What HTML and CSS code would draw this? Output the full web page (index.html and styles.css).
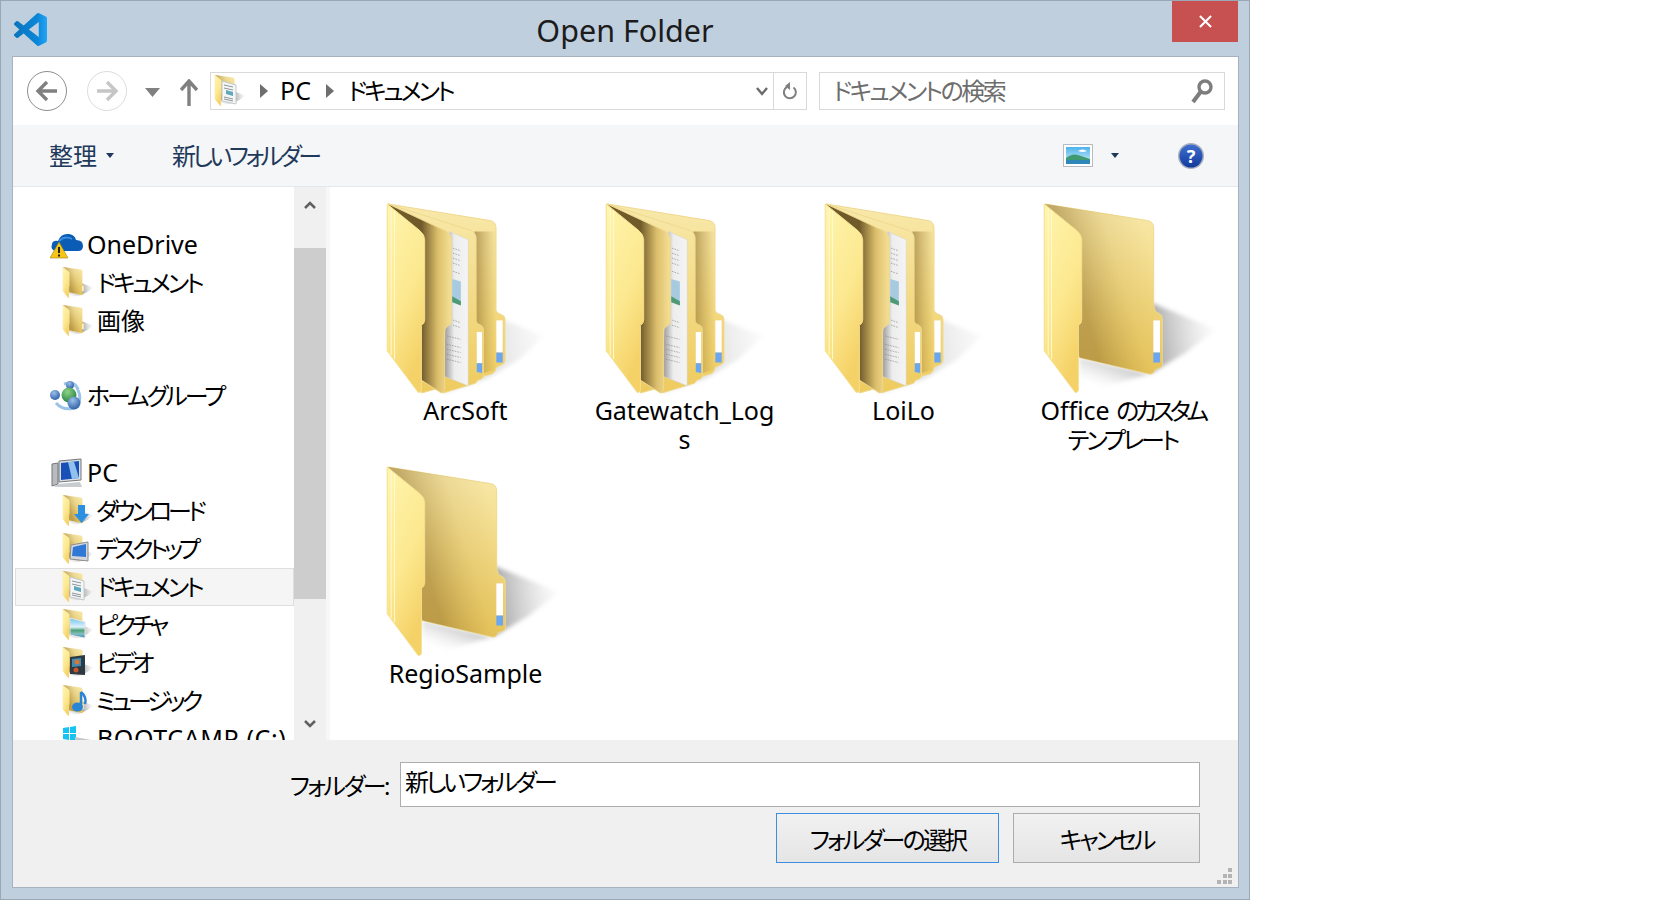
FILE: index.html
```html
<!DOCTYPE html>
<html lang="ja">
<head>
<meta charset="utf-8">
<title>Open Folder</title>
<link rel="stylesheet" href="styles.css">
</head>
<body>
<svg class="defs" aria-hidden="true">
  <defs>
    <linearGradient id="gBack" x1="0" y1="0" x2="0" y2="1"><stop offset="0" stop-color="#f8e9ab"/><stop offset="1" stop-color="#eecb5e"/></linearGradient>
    <linearGradient id="gShade" gradientUnits="userSpaceOnUse" x1="185" y1="300" x2="420" y2="230"><stop offset="0" stop-color="#8a6a28" stop-opacity=".5"/><stop offset=".55" stop-color="#a88838" stop-opacity=".14"/><stop offset="1" stop-color="#a88838" stop-opacity="0"/></linearGradient>
    <linearGradient id="gShade2" gradientUnits="userSpaceOnUse" x1="345" y1="0" x2="410" y2="0"><stop offset="0" stop-color="#8a6a28" stop-opacity=".6"/><stop offset="1" stop-color="#a88838" stop-opacity="0"/></linearGradient>
    <linearGradient id="gFront" x1="0" y1="0" x2="0.4" y2="1"><stop offset="0" stop-color="#fff5ad"/><stop offset=".6" stop-color="#fce88f"/><stop offset="1" stop-color="#f5d268"/></linearGradient>
    <linearGradient id="gMid" gradientUnits="userSpaceOnUse" x1="185" y1="0" x2="275" y2="0"><stop offset="0" stop-color="#705a2a"/><stop offset=".55" stop-color="#dcbf6c"/><stop offset="1" stop-color="#f6e096"/></linearGradient>
    <linearGradient id="gPaper" gradientUnits="userSpaceOnUse" x1="250" y1="0" x2="326" y2="0"><stop offset="0" stop-color="#8e8e8e"/><stop offset=".45" stop-color="#ededed"/><stop offset="1" stop-color="#f4f4f4"/></linearGradient>
    <linearGradient id="gSh" gradientUnits="userSpaceOnUse" x1="400" y1="450" x2="610" y2="425"><stop offset="0" stop-color="#777" stop-opacity=".7"/><stop offset=".55" stop-color="#aaa" stop-opacity=".35"/><stop offset="1" stop-color="#ccc" stop-opacity="0"/></linearGradient>
    <linearGradient id="gUnder" gradientUnits="userSpaceOnUse" x1="300" y1="520" x2="270" y2="600"><stop offset="0" stop-color="#999" stop-opacity=".55"/><stop offset="1" stop-color="#ccc" stop-opacity="0"/></linearGradient>
    <linearGradient id="gCode" x1="0" y1="0" x2="1" y2="0"><stop offset="0" stop-color="#0a74bd"/><stop offset=".7" stop-color="#0a86d8"/><stop offset="1" stop-color="#24a5f5"/></linearGradient>
    <linearGradient id="gHelp" x1="0" y1="0" x2="0" y2="1"><stop offset="0" stop-color="#3f6fd0"/><stop offset="1" stop-color="#123a9c"/></linearGradient>
    <linearGradient id="gSky" x1="0" y1="0" x2="0" y2="1"><stop offset="0" stop-color="#6ec2ee"/><stop offset=".45" stop-color="#dff2fb"/><stop offset=".62" stop-color="#4aa27a"/><stop offset=".8" stop-color="#86bfc0"/><stop offset="1" stop-color="#2a7fb8"/></linearGradient>
    <linearGradient id="gSkyV" x1="0" y1="0" x2="0" y2="1"><stop offset="0" stop-color="#4db3ea"/><stop offset="1" stop-color="#d9f0fb"/></linearGradient>
    <radialGradient id="gBlue" cx=".4" cy=".3" r=".8"><stop offset="0" stop-color="#9cc0ea"/><stop offset="1" stop-color="#1f559f"/></radialGradient>
    <radialGradient id="gGreen" cx=".4" cy=".3" r=".8"><stop offset="0" stop-color="#8fd48a"/><stop offset="1" stop-color="#1a7a36"/></radialGradient>
    <filter id="blur"><feGaussianBlur stdDeviation="7"/></filter>

    <g id="f-empty">
      <path filter="url(#blur)" fill="url(#gSh)" d="M405 340 L600 420 L510 490 L400 555 Z"/>
      <path filter="url(#blur)" fill="url(#gUnder)" d="M188 505 L400 555 L188 612 Z"/>
      <path fill="url(#gBack)" stroke="#efd98e" stroke-width="3" d="M85 42 L393 92 Q412 95 412 115 L412 345 Q414 368 428 372 Q438 376 438 388 L438 525 Q438 535 425 538 L415 542 Q412 555 400 555 L188 505 Z"/>
      <path fill="url(#gShade)" d="M85 42 L393 92 Q412 95 412 115 L412 345 Q414 368 428 372 Q438 376 438 388 L438 525 Q438 535 425 538 L415 542 Q412 555 400 555 L188 505 Z"/>
      <rect x="411" y="393" width="20" height="97" fill="#fff"/>
      <rect x="411" y="490" width="20" height="30" fill="#6ba6f2"/>
      <path fill="url(#gFront)" stroke="#f4e08f" stroke-width="3" d="M82 42 L180 122 Q195 135 195 150 L195 390 Q195 402 185 408 L185 600 Q185 612 175 610 L82 485 Z"/>
      <path fill="none" stroke="#fff9d0" stroke-width="3" d="M94 55 L94 498 M104 62 L104 510"/>
    </g>

    <g id="f-full">
      <path filter="url(#blur)" fill="url(#gSh)" opacity=".3" d="M430 390 L555 440 L480 510 L380 570 L250 612 L250 560 Z"/>
      <path fill="url(#gBack)" stroke="#efd98e" stroke-width="3" d="M85 42 L392 92 Q410 95 410 115 L410 362 Q412 372 425 375 Q437 378 437 390 L437 515 Q437 525 420 530 L410 535 Q408 552 395 555 L185 612 Z"/>
      <path fill="url(#gShade2)" d="M345 125 L410 125 L410 540 L345 560 Z"/>
      <rect x="411" y="393" width="19" height="97" fill="#fff"/>
      <rect x="411" y="490" width="19" height="30" fill="#6ba6f2"/>
      <path fill="url(#gBack)" stroke="#efd98e" stroke-width="3" d="M85 42 L335 122 Q350 130 350 145 L350 395 Q352 405 365 408 Q372 412 372 422 L372 560 Q372 570 355 573 Q350 585 340 585 L250 612 Z"/>
      <rect x="352" y="428" width="16" height="94" fill="#fff"/>
      <path d="M352 522 L368 522 L368 552 L352 549 Z" fill="#6ba6f2"/>
      <path fill="url(#gPaper)" stroke="#d5d5d5" stroke-width="1.5" d="M270 125 L326 150 L326 590 L250 560 Z"/>
      <g fill="none" stroke="#8a8a8a" stroke-width="2" stroke-dasharray="5 3">
        <path d="M280 175 L303 183 M280 190 L303 198 M280 205 L303 213 M280 220 L303 228 M280 245 L303 253"/>
        <path d="M280 392 L303 400 M280 407 L303 415 M262 440 L303 450 M262 465 L303 475 M262 480 L303 490 M262 495 L303 505 M262 510 L303 520"/>
      </g>
      <path fill="#a6cbe0" d="M278 268 L304 276 L304 345 L278 335 Z"/>
      <path fill="#4f9a76" d="M278 320 L304 335 L304 348 L278 338 Z"/>
      <path fill="url(#gMid)" stroke="#efd98e" stroke-width="3" d="M85 42 L262 125 Q275 135 275 148 L275 400 Q272 408 262 412 Q255 416 255 425 L255 600 Q253 612 245 612 L180 570 Z"/>
      <path fill="url(#gFront)" stroke="#f4e08f" stroke-width="3" d="M82 42 L180 122 Q195 135 195 150 L195 390 Q195 402 185 408 L185 600 Q185 612 175 610 L82 485 Z"/>
      <path fill="none" stroke="#fff9d0" stroke-width="3" d="M94 55 L94 498 M104 62 L104 510"/>
    </g>

    <g id="f-small"><use href="#f-empty" transform="translate(-3 -1.2) scale(0.059 0.0543)"/></g>

    <g id="o-doc">
      <path d="M9 7 L23 11 L23 30 L9 27 Z" fill="#f4f6f6" stroke="#c4c8cc"/>
      <path d="M11 11 L20 13 M11 14 L20 16 M11 23 L20 25 M11 25 L20 27" stroke="#8f959a" fill="none"/>
      <path d="M13 16 L20 18 L20 22 L13 20 Z" fill="#5fa7bc"/>
    </g>
  </defs>
</svg>

<div class="window">
  <header class="titlebar">
    <svg class="app-logo" viewBox="0 0 24 24"><path fill="url(#gCode)" d="M23.15 2.587L18.21.21a1.494 1.494 0 0 0-1.705.29l-9.46 8.63-4.12-3.128a.999.999 0 0 0-1.276.057L.327 7.261A1 1 0 0 0 .326 8.74L3.899 12 .326 15.26a1 1 0 0 0 .001 1.479L1.65 17.94a.999.999 0 0 0 1.276.057l4.12-3.128 9.46 8.63a1.492 1.492 0 0 0 1.704.29l4.942-2.377A1.5 1.5 0 0 0 24 20.06V3.939a1.5 1.5 0 0 0-.85-1.352zm-5.146 14.861L10.826 12l7.178-5.448v10.896z"/></svg>
    <h1 class="title">Open Folder</h1>
    <div class="close"><svg viewBox="0 0 14 14" class="close-x"><path d="M1 1 L13 13 M13 1 L1 13"/></svg></div>
  </header>

  <div class="client">
    <div class="navrow">
      <svg class="circle-btn" viewBox="0 0 40 40"><circle cx="20" cy="20" r="19.5" fill="#fff" stroke="#8d8d8d"/><path d="M30 20 H12 M20 11 L11 20 L20 29" fill="none" stroke="#808080" stroke-width="3.4"/></svg>
      <svg class="circle-btn fwd" viewBox="0 0 40 40"><circle cx="20" cy="20" r="19.5" fill="#fff" stroke="#dcdcdc"/><path d="M10 20 H28 M20 11 L29 20 L20 29" fill="none" stroke="#c6c6c6" stroke-width="3.4"/></svg>
      <svg class="hist" viewBox="0 0 15 9"><path d="M0 0 H15 L7.5 9 Z" fill="#808080"/></svg>
      <svg class="up" viewBox="0 0 18 27"><path d="M9 27 V3 M1 11 L9 2 L17 11" fill="none" stroke="#808080" stroke-width="3.4"/></svg>
      <div class="address">
        <svg class="addr-ico" viewBox="0 0 36 34"><use href="#f-small"/><use href="#o-doc"/></svg>
        <svg class="crumb" viewBox="0 0 8 14"><path d="M0 0 L8 7 L0 14 Z"/></svg>
        <span class="crumb-text latin">PC</span>
        <svg class="crumb" viewBox="0 0 8 14"><path d="M0 0 L8 7 L0 14 Z"/></svg>
        <span class="crumb-text kana">ドキュメント</span>
        <svg class="addr-drop" viewBox="0 0 12 9"><path d="M1 1 L6 7 L11 1" fill="none" stroke="#6a6a6a" stroke-width="2.4"/></svg>
        <div class="refresh"><svg viewBox="0 0 16 18" class="refresh-ico"><path d="M11.5 5.5 A6 6 0 1 1 5 5" fill="none" stroke="#808080" stroke-width="2"/><path d="M8 0 L8 8 L3 4 Z" fill="#808080"/></svg></div>
      </div>
      <div class="search">
        <span class="search-text">ドキュメントの検索</span>
        <svg class="search-ico" viewBox="0 0 22 26"><circle cx="14" cy="9" r="6" fill="none" stroke="#7d7d7d" stroke-width="3.4"/><path d="M9.5 14 L2 24" stroke="#7d7d7d" stroke-width="4" fill="none"/></svg>
      </div>
    </div>

    <div class="toolbar">
      <span class="tool organize">整理</span>
      <svg class="tool-caret" viewBox="0 0 8 5"><path d="M0 0 H8 L4 5 Z"/></svg>
      <span class="tool newfolder">新しいフォルダー</span>
      <svg class="view-ico" viewBox="0 0 30 23"><rect x=".5" y=".5" width="29" height="22" fill="#fff" stroke="#b8bcc2"/><rect x="3" y="3" width="24" height="17" fill="url(#gSkyV)"/><path d="M3 14 Q10 8 18 12 L27 15 V17 H3 Z" fill="#3f9a72"/><rect x="3" y="16" width="24" height="4" fill="#2f86b8"/><path d="M15 7 Q19 4 24 7 Q20 9 15 7 Z" fill="#fff"/></svg>
      <svg class="tool-caret view-caret" viewBox="0 0 8 5"><path d="M0 0 H8 L4 5 Z"/></svg>
      <svg class="help" viewBox="0 0 28 28"><circle cx="14" cy="14" r="13" fill="#a6aebd"/><circle cx="14" cy="14" r="11.500" fill="url(#gHelp)"/><text x="14" y="20.5" class="help-q">?</text></svg>
    </div>

    <div class="body">
      <nav class="tree">
        <ul class="tree-list">
          <li class="row top"><svg class="ico-top" viewBox="0 0 34 30"><path d="M6 21 Q0 20 2 14 Q3 10 8 11 Q11 3 19 4 Q25 5 26 10 Q33 10 33 16 Q33 21 28 21 Z" fill="#0a5cb4"/><path d="M9 11 Q15 5 22 9" fill="none" stroke="#3d8ee0" stroke-width="2"/><path d="M9 12 L18 28 H0 Z" fill="#f5c518" stroke="#a8840c" stroke-width=".6"/><path d="M9 17 V23 M9 24.5 V26.5" stroke="#222" stroke-width="2"/></svg><span class="latin">OneDrive</span></li>
          <li class="row sub"><svg class="ico" viewBox="0 0 36 34"><use href="#f-small"/></svg><span class="kana">ドキュメント</span></li>
          <li class="row sub"><svg class="ico" viewBox="0 0 36 34"><use href="#f-small"/></svg><span>画像</span></li>
          <li class="row top gap-a"><svg class="ico-top" viewBox="0 0 34 30"><path d="M14 3 Q26 0 28 9 Q33 20 24 27 Q13 30 6 22" fill="none" stroke="#9cc4e8" stroke-width="3"/><circle cx="20" cy="4" r="4" fill="url(#gBlue)"/><circle cx="5" cy="14" r="5" fill="url(#gBlue)"/><circle cx="19" cy="14" r="7.5" fill="url(#gGreen)"/><circle cx="24" cy="22" r="6.5" fill="url(#gBlue)"/></svg><span class="kana">ホームグループ</span></li>
          <li class="row top gap-b"><svg class="ico-top" viewBox="0 0 34 30"><path d="M9 3 L31 1 V22 L9 24 Z" fill="#d7dde4" stroke="#777"/><path d="M11 5 L29 3 V20 L11 22 Z" fill="#1950b8"/><path d="M18 4 L24 3.500 L29 20 L22 21 Z" fill="#8fc0ee"/><path d="M2 6 L8 5 V26 L2 28 Z" fill="#b8bcc0" stroke="#777"/><path d="M8 26 L30 24 L32 29 H4 Z" fill="#c8ccd0"/></svg><span class="latin">PC</span></li>
          <li class="row sub"><svg class="ico" viewBox="0 0 36 34"><use href="#f-small"/><path d="M17 11 H24 V20 H28 L20.500 29 L13 20 H17 Z" fill="#2c90e2"/></svg><span class="tighter">ダウンロード</span></li>
          <li class="row sub"><svg class="ico" viewBox="0 0 36 34"><use href="#f-small"/><path d="M10 13 L27 10 V29 L9 27 Z" fill="#d3d6da" stroke="#8a8e92"/><path d="M12 15 L25 12 V25 L11 24 Z" fill="#2f78d6"/></svg><span class="tighter">デスクトップ</span></li>
          <li class="row sub selected"><svg class="ico" viewBox="0 0 36 34"><use href="#f-small"/><use href="#o-doc"/></svg><span class="kana">ドキュメント</span></li>
          <li class="row sub"><svg class="ico" viewBox="0 0 36 34"><use href="#f-small"/><path d="M9 10 L24 14 V30 L9 27 Z" fill="url(#gSky)" stroke="#e4e6e8"/></svg><span class="tighter">ピクチャ</span></li>
          <li class="row sub"><svg class="ico" viewBox="0 0 36 34"><use href="#f-small"/><path d="M9 11 L24 9 V29 L9 28 Z" fill="#2d3a44"/><path d="M11 13 L20 12 V20 L11 21 Z" fill="#3d8db8"/><circle cx="16" cy="16" r="2.500" fill="#d9782d"/><circle cx="15" cy="24" r="2.500" fill="#c4562a"/></svg><span class="tighter">ビデオ</span></li>
          <li class="row sub"><svg class="ico" viewBox="0 0 36 34"><use href="#f-small"/><path d="M20 8 V22" stroke="#2a86d4" stroke-width="2.500" fill="none"/><path d="M20 8 Q26 13 24 20" stroke="#2a86d4" stroke-width="2.500" fill="none"/><ellipse cx="16.500" cy="23" rx="5.500" ry="4.500" fill="#2a86d4"/></svg><span class="tighter">ミュージック</span></li>
          <li class="row sub"><svg class="ico" viewBox="0 0 36 34"><path fill="#16c4f4" d="M2 6 L8 5 V11 H2 Z M9 5 L15 4 V11 H9 Z M2 12 H8 V18 L2 17 Z M9 12 H15 V19 L9 18 Z"/><path fill="#c4c6c8" d="M14 15 L30 18 V21 L14 19 Z"/></svg><span class="latin wide">BOOTCAMP (C:)</span></li>
        </ul>
      </nav>
      <div class="scrollbar">
        <svg class="sb-arrow" viewBox="0 0 12 8"><path d="M1 7 L6 2 L11 7" fill="none" stroke="#606060" stroke-width="2.500"/></svg>
        <div class="sb-thumb"></div>
        <div class="sb-rest"></div>
        <svg class="sb-arrow" viewBox="0 0 12 8"><path d="M1 1 L6 6 L11 1" fill="none" stroke="#606060" stroke-width="2.500"/></svg>
      </div>
      <main class="files">
        <figure class="item"><svg class="folder" viewBox="-10.500 36 657 585"><use href="#f-full"/></svg><figcaption>ArcSoft</figcaption></figure>
        <figure class="item"><svg class="folder" viewBox="-10.500 36 657 585"><use href="#f-full"/></svg><figcaption>Gatewatch_Log<br>s</figcaption></figure>
        <figure class="item"><svg class="folder" viewBox="-10.500 36 657 585"><use href="#f-full"/></svg><figcaption>LoiLo</figcaption></figure>
        <figure class="item"><svg class="folder" viewBox="-10.500 36 657 585"><use href="#f-empty"/></svg><figcaption>Office <span class="tight">のカスタム</span><br><span class="kana">テンプレート</span></figcaption></figure>
        <figure class="item"><svg class="folder" viewBox="-10.500 36 657 585"><use href="#f-empty"/></svg><figcaption>RegioSample</figcaption></figure>
      </main>
    </div>

    <footer class="footer">
      <div class="field">
        <label class="field-label" for="name">フォルダー:</label>
        <input class="field-input kana" id="name" value="新しいフォルダー">
      </div>
      <div class="actions">
        <button class="btn primary">フォルダーの選択</button>
        <button class="btn cancel kana">キャンセル</button>
      </div>
      <svg class="grip" viewBox="0 0 16 16"><path fill="#b4b4b4" d="M11 0h4v4h-4z M6 6h4v4H6z M11 6h4v4h-4z M0 12h4v4H0z M6 12h4v4H6z M11 12h4v4h-4z"/></svg>
    </footer>
  </div>
</div>
</body>
</html>
```

FILE: styles.css
```css
* { box-sizing: border-box; }
html, body { margin: 0; padding: 0; background: #fff; }
body {
  font-family: "Noto Sans", "Noto Sans CJK JP", sans-serif;
  font-size: 24px;
  color: #000;
  font-feature-settings: "palt";
}
.defs { position: absolute; width: 0; height: 0; }
.kana { font-size: 24px; letter-spacing: -3px; }
.tighter { letter-spacing: -4px; margin-left: -1px; }
.tight { font-size: 24px; letter-spacing: -4.4px; }
.latin { font-size: 25px; letter-spacing: 0; padding-bottom: 2px; }
.wide { letter-spacing: .6px; }

.window {
  width: 1250px;
  height: 900px;
  background: #bfcfde;
  border: 1px solid #9aa8b5;
  display: flex;
  flex-direction: column;
}

.titlebar {
  height: 56px;
  flex: none;
  display: grid;
  grid-template-columns: 1fr auto 1fr;
  align-items: start;
}
.app-logo { width: 33px; height: 33px; margin: 12px 0 0 13px; }
.title {
  margin: 0;
  font-size: 30.5px;
  font-weight: 400;
  line-height: 58px;
  color: #1c1c1c;
}
.close {
  justify-self: end;
  width: 66px;
  height: 41px;
  margin-right: 11px;
  background: #c75050;
  display: flex;
  align-items: center;
  justify-content: center;
}
.close-x { width: 13px; height: 13px; }
.close-x path { stroke: #fff; stroke-width: 2.2; fill: none; }

.client {
  flex: 1;
  margin: 0 11px 12px 12px;
  background: #fff;
  display: flex;
  flex-direction: column;
  min-height: 0;
  outline: 1px solid #a5b2bf;
}

.navrow {
  height: 68px;
  flex: none;
  display: flex;
  align-items: center;
  padding: 0 12px 0 14px;
}
.circle-btn { width: 40px; height: 40px; flex: none; }
.fwd { margin-left: 20px; }
.hist { width: 15px; height: 9px; margin-left: 18px; flex: none; margin-top: 2px; }
.up { width: 18px; height: 27px; margin-left: 20px; flex: none; margin-top: 2px; }
.address {
  width: 597px;
  height: 38px;
  margin-left: 12px;
  border: 1px solid #d9d9d9;
  display: flex;
  align-items: center;
  flex: none;
}
.addr-ico { width: 36px; height: 34px; margin-left: 2px; flex: none; }
.crumb { width: 8px; height: 14px; fill: #6e6e6e; margin-left: 11px; flex: none; }
.crumb-text { margin-left: 12px; line-height: 36px; }
.crumb-text + .crumb { margin-left: 15px; }
.crumb + .crumb-text.kana { margin-left: 14px; }
.addr-drop { width: 12px; height: 9px; margin-left: auto; flex: none; }
.refresh {
  width: 33px;
  height: 36px;
  margin-left: 5px;
  border-left: 1px solid #d9d9d9;
  display: flex;
  align-items: center;
  justify-content: center;
}
.refresh-ico { width: 16px; height: 18px; }
.search {
  width: 406px;
  height: 38px;
  margin-left: 12px;
  border: 1px solid #d9d9d9;
  display: flex;
  align-items: center;
  padding: 0 11px 0 13px;
  flex: none;
}
.search-text { color: #6d6d6d; line-height: 36px; letter-spacing: -2.5px; }
.search-ico { width: 22px; height: 26px; margin-left: auto; }

.toolbar {
  height: 62px;
  flex: none;
  background: #f5f6f7;
  border-bottom: 1px solid #e6e7e8;
  display: flex;
  align-items: center;
  padding: 0 33px 0 36px;
  color: #1e395b;
}
.tool { line-height: 60px; }
.tool-caret { width: 8px; height: 5px; fill: #1e395b; margin-left: 9px; flex: none; }
.newfolder { margin-left: 58px; letter-spacing: -3.4px; }
.view-ico { width: 30px; height: 23px; margin-left: auto; flex: none; }
.view-caret { margin-left: 18px; }
.help { width: 28px; height: 28px; margin-left: 58px; flex: none; }
.help-q { font-size: 18px; font-weight: 700; fill: #fff; text-anchor: middle; }

.body {
  flex: 1;
  min-height: 0;
  display: flex;
  overflow: hidden;
}

.tree {
  width: 281px;
  flex: none;
  overflow: hidden;
  padding: 39px 0 0 2px;
}
.tree-list { list-style: none; margin: 0; padding: 0; }
.row {
  height: 38px;
  width: 279px;
  display: flex;
  align-items: center;
  line-height: 36px;
  white-space: nowrap;
  border: 1px solid transparent;
}
.top { padding-left: 34px; }
.sub { padding-left: 45px; }
.gap-a { margin-top: 37px; }
.gap-b { margin-top: 39px; }
.selected { background: #f5f5f5; border-color: #dedede; }
.ico-top { width: 34px; height: 30px; flex: none; margin-right: 3px; }
.ico { width: 36px; height: 34px; flex: none; }

.scrollbar {
  width: 32px;
  flex: none;
  background: #f0f0f0;
  display: flex;
  flex-direction: column;
  align-items: center;
}
.sb-arrow { width: 12px; height: 8px; flex: none; margin: 14px 0 39px; }
.sb-arrow:last-child { margin: 0 0 12px; }
.sb-thumb { width: 100%; height: 351px; background: #cdcdcd; flex: none; }
.sb-rest { flex: 1; }

.files {
  flex: 1;
  border-left: 4px solid #f7f7f7;
  padding: 15px 0 0 26px;
  display: grid;
  grid-template-columns: repeat(4, 219px);
  grid-auto-rows: 263px;
}
.item { margin: 0; text-align: center; }
.folder { display: block; width: 219px; height: 194px; }
figcaption { font-size: 25px; line-height: 29px; }

.footer {
  height: 147px;
  flex: none;
  background: #f0f0f0;
  position: relative;
  padding: 22px 38px 0 0;
}
.field {
  display: flex;
  justify-content: flex-end;
  align-items: center;
  gap: 12px;
}
.field-label { letter-spacing: -2.5px; }
.field-input {
  width: 800px;
  height: 45px;
  border: 1px solid #adadad;
  background: #fff;
  font: inherit;
  font-feature-settings: inherit;
  padding: 0 3px 9px 4px;
  outline: none;
  color: #000;
}
.actions {
  display: flex;
  justify-content: flex-end;
  gap: 14px;
  margin-top: 6px;
}
.btn {
  height: 50px;
  font: inherit;
  font-feature-settings: inherit;
  color: #000;
  border: 1px solid #acacac;
  background: linear-gradient(#f1f1f1, #e5e5e5);
  padding: 0;
}
.primary { width: 223px; border-color: #3c8fe0; letter-spacing: -2.8px; }
.cancel { width: 187px; }
.grip { position: absolute; right: 5px; bottom: 3px; width: 16px; height: 16px; }
```
